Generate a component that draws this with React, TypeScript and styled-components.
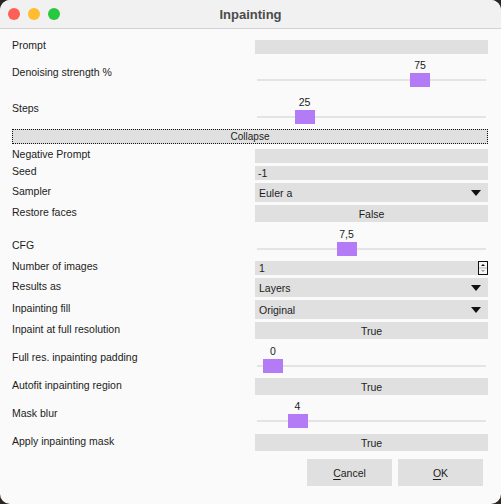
import React from 'react'
import styled, { createGlobalStyle } from 'styled-components'

const GlobalStyle = createGlobalStyle`
  html, body {
    margin: 0;
    padding: 0;
    background: #2a2624;
  }
  body {
    font-family: 'Liberation Sans', Arial, Helvetica, sans-serif;
  }
`

const Window = styled.div`
  width: 501px;
  height: 504px;
  box-sizing: border-box;
  background: #fafafa;
  border-radius: 10px;
  overflow: hidden;
  display: flex;
  flex-direction: column;
`

const TitleBar = styled.div`
  height: 28px;
  flex-shrink: 0;
  background: #f1f1f1;
  border-bottom: 1px solid #d2d2d2;
  position: relative;
  display: flex;
  align-items: center;
  justify-content: center;
`

const Lights = styled.div`
  position: absolute;
  left: 8px;
  top: 8px;
  display: flex;
  gap: 8px;
`

const Light = styled.span<{ $color: string }>`
  width: 12px;
  height: 12px;
  border-radius: 50%;
  background: ${(p) => p.$color};
`

const Title = styled.div`
  font-size: 13px;
  font-weight: bold;
  color: #4b4b4b;
`

const Form = styled.div`
  padding: 11px 13px 0 12px;
  display: flex;
  flex-direction: column;
`

const Row = styled.div<{ $h: number }>`
  display: grid;
  grid-template-columns: 243px 233px;
  height: ${(p) => p.$h}px;
`

const Label = styled.div<{ $top: number }>`
  margin-top: ${(p) => p.$top}px;
  font-size: 10.5px;
  line-height: 14px;
  color: #1c1c1c;
  white-space: nowrap;
`

const Field = styled.div<{ $h?: number }>`
  height: ${(p) => p.$h ?? 14}px;
  background: #e0e0e0;
  font-size: 10.5px;
  line-height: ${(p) => p.$h ?? 14}px;
  color: #1c1c1c;
  padding-left: 3px;
  box-sizing: border-box;
`

const SpinWrap = styled.div`
  display: flex;
  height: 14px;
`

const SpinField = styled(Field)`
  flex: 1;
  padding-left: 4px;
`

const Combo = styled.div`
  height: 19px;
  background: #e0e0e0;
  display: flex;
  align-items: center;
  justify-content: space-between;
  padding: 0 7px 0 4px;
  font-size: 10.5px;
  color: #1c1c1c;
`

const Toggle = styled.div`
  height: 17px;
  background: #e0e0e0;
  display: flex;
  align-items: center;
  justify-content: center;
  font-size: 10.5px;
  color: #1c1c1c;
`

const CollapseButton = styled.div`
  height: 15px;
  margin-bottom: 5px;
  box-sizing: border-box;
  border: 1px dotted #111;
  background: #e0e0e0;
  display: flex;
  align-items: center;
  justify-content: center;
  font-size: 10px;
  color: #1c1c1c;
`

const SliderBox = styled.div`
  position: relative;
  height: 32px;
`

const Track = styled.div`
  position: absolute;
  left: 2px;
  right: 2px;
  top: 24px;
  height: 2px;
  background: #e4e4e4;
`

const Thumb = styled.div`
  position: absolute;
  top: 18px;
  width: 20px;
  height: 14px;
  background: #b47bf7;
`

const ThumbValue = styled.div`
  position: absolute;
  top: -14px;
  left: -10px;
  width: 40px;
  text-align: center;
  font-size: 10.5px;
  line-height: 12px;
  color: #1c1c1c;
`

const Footer = styled.div`
  display: flex;
  justify-content: flex-end;
  gap: 6px;
  padding: 8px 18px 0 0;
`

const DialogButton = styled.div`
  width: 85px;
  height: 27px;
  background: #e0e0e0;
  display: flex;
  align-items: center;
  justify-content: center;
  font-size: 10.5px;
  color: #1c1c1c;
  u {
    text-decoration: underline;
    text-underline-offset: 2px;
  }
`

const Arrow = () => (
  <svg width="10" height="6" viewBox="0 0 10 6">
    <path d="M0 0 L10 0 L5 6 Z" fill="#111" />
  </svg>
)

const SpinIcon = () => (
  <svg width="10" height="14" viewBox="0 0 10 14">
    <rect x="0.5" y="0.5" width="9" height="13" fill="#f6f6f6" stroke="#111" />
    <path d="M3 5 L7 5 L5 3 Z" fill="#111" />
    <line x1="1" y1="7" x2="9" y2="7" stroke="#bbb" />
    <path d="M3 9 L7 9 L5 11 Z" fill="#999" />
  </svg>
)

interface SliderProps {
  value: number
  min: number
  max: number
  text?: string
}

const Slider: React.FC<SliderProps> = ({ value, min, max, text }) => {
  const left = 8 + ((value - min) / (max - min)) * 196
  return (
    <SliderBox>
      <Track />
      <Thumb style={{ left }}>
        <ThumbValue>{text ?? value}</ThumbValue>
      </Thumb>
    </SliderBox>
  )
}

const App: React.FC = () => {
  return (
    <>
      <GlobalStyle />
      <Window>
        <TitleBar>
          <Lights>
            <Light $color="#fe5f57" />
            <Light $color="#febc2e" />
            <Light $color="#28c840" />
          </Lights>
          <Title>Inpainting</Title>
        </TitleBar>
        <Form>
          <Row $h={15}>
            <Label $top={-2}>Prompt</Label>
            <Field />
          </Row>
          <Row $h={37}>
            <Label $top={10}>Denoising strength %</Label>
            <Slider value={75} min={0} max={100} />
          </Row>
          <Row $h={37}>
            <Label $top={9}>Steps</Label>
            <Slider value={25} min={1} max={150} />
          </Row>
          <CollapseButton>Collapse</CollapseButton>
          <Row $h={17}>
            <Label $top={-2}>Negative Prompt</Label>
            <Field />
          </Row>
          <Row $h={17}>
            <Label $top={-2}>Seed</Label>
            <Field>-1</Field>
          </Row>
          <Row $h={22}>
            <Label $top={1}>Sampler</Label>
            <Combo>
              Euler a
              <Arrow />
            </Combo>
          </Row>
          <Row $h={19}>
            <Label $top={0}>Restore faces</Label>
            <Toggle>False</Toggle>
          </Row>
          <Row $h={37}>
            <Label $top={14}>CFG</Label>
            <Slider value={7.5} min={0} max={20} text="7,5" />
          </Row>
          <Row $h={17}>
            <Label $top={-2}>Number of images</Label>
            <SpinWrap>
              <SpinField>1</SpinField>
              <SpinIcon />
            </SpinWrap>
          </Row>
          <Row $h={22}>
            <Label $top={1}>Results as</Label>
            <Combo>
              Layers
              <Arrow />
            </Combo>
          </Row>
          <Row $h={22}>
            <Label $top={1}>Inpainting fill</Label>
            <Combo>
              Original
              <Arrow />
            </Combo>
          </Row>
          <Row $h={19}>
            <Label $top={0}>Inpaint at full resolution</Label>
            <Toggle>True</Toggle>
          </Row>
          <Row $h={37}>
            <Label $top={9}>Full res. inpainting padding</Label>
            <Slider value={0} min={0} max={256} />
          </Row>
          <Row $h={18}>
            <Label $top={0}>Autofit inpainting region</Label>
            <Toggle>True</Toggle>
          </Row>
          <Row $h={38}>
            <Label $top={10}>Mask blur</Label>
            <Slider value={4} min={0} max={32} />
          </Row>
          <Row $h={17}>
            <Label $top={0}>Apply inpainting mask</Label>
            <Toggle>True</Toggle>
          </Row>
        </Form>
        <Footer>
          <DialogButton>
            <span>
              <u>C</u>ancel
            </span>
          </DialogButton>
          <DialogButton>
            <span>
              <u>O</u>K
            </span>
          </DialogButton>
        </Footer>
      </Window>
    </>
  )
}

export default App
